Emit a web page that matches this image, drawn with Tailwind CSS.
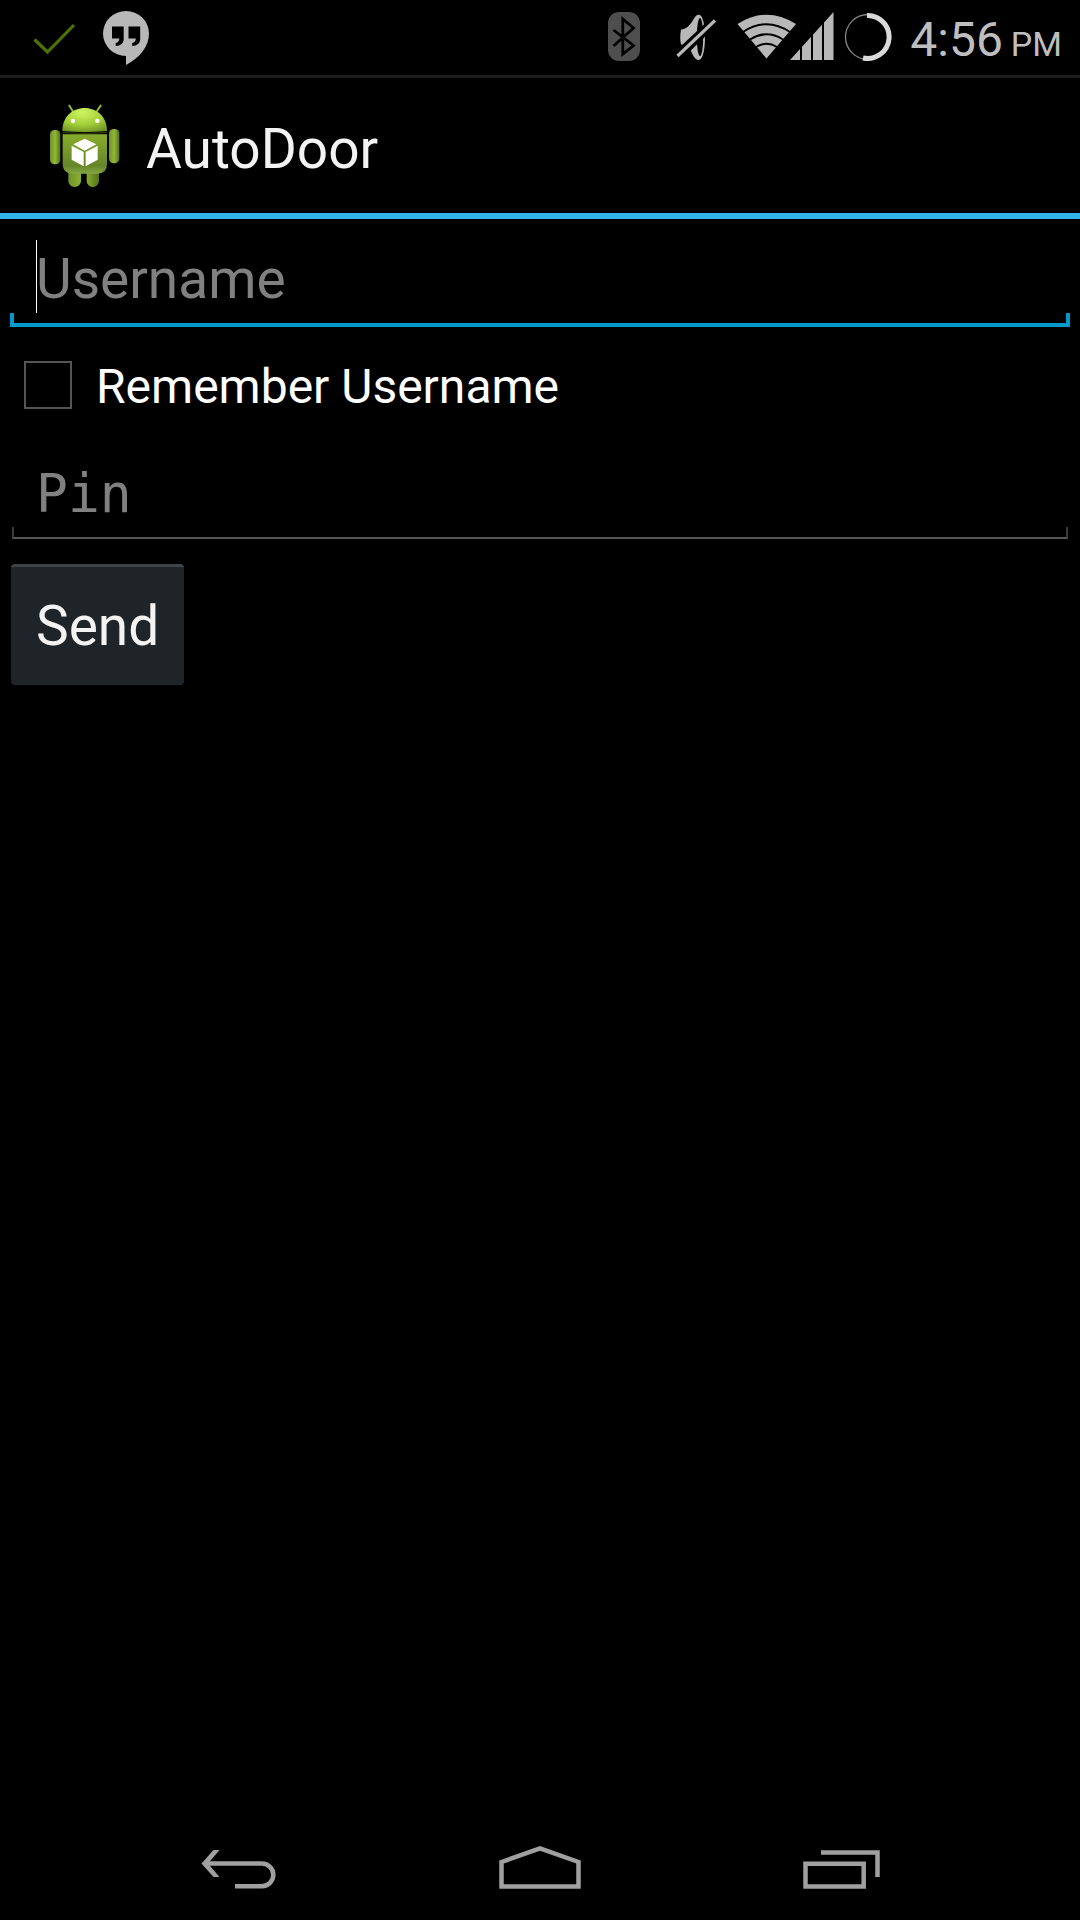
<!DOCTYPE html>
<html lang="en">
<head>
<meta charset="utf-8">
<meta name="viewport" content="width=device-width, initial-scale=1">
<title>AutoDoor</title>
<script src="https://cdn.jsdelivr.net/npm/@tailwindcss/browser@4"></script>
</head>
<body class="flex min-h-screen flex-col bg-black font-[Roboto,sans-serif] text-[#f3f3f3]">

<!-- Status bar -->
<div class="flex h-[78px] items-start justify-between border-b-[3px] border-[#1c1c1c] pl-8 pr-[18px]">
  <div class="flex gap-[22px]">
    <svg class="h-[75px] w-12" viewBox="32 0 48 75" fill="none" stroke="#4b7300" stroke-width="3.2" aria-label="Done"><path d="M34.5 39.5 47.5 52 74 25"/></svg>
    <svg class="h-[75px] w-12" viewBox="102 0 48 75" aria-label="Hangouts"><path fill="#b8b8b8" d="M126 11a23 22.500 0 0 1 23 22.500c0 13-9 24-23 31.500V56a23 22.500 0 0 1 0-45Z"/><path d="M112 26.500h11.700v12.500c0 4-3 7-8 7v-3c2.300-.4 3.600-2 3.600-4.500H112ZM128.500 26.500h11.700v12.500c0 4-3 7-8 7v-3c2.300-.4 3.600-2 3.600-4.500h-7.300Z"/></svg>
  </div>
  <div class="flex">
    <svg class="mr-9 h-[75px] w-8" viewBox="608 0 32 75" aria-label="Bluetooth"><rect x="608" y="12" width="32" height="49" rx="11" fill="#4e4e4e"/><path d="M613.500 30 633.500 45.500 622.800 54V19L633.500 28 613.500 46" fill="none" stroke="#000" stroke-width="2.800"/></svg>
    <svg class="mr-[21px] h-[75px] w-10" viewBox="676 0 40 75" aria-label="Silent"><path fill="#b8b8b8" d="M681 29.500c5 0 9-4 13-11 2-3.500 4-4 6-3.500 3 2 5 10 5 22s-2 22-6 23c-4 .5-6-5-9-11-3-3.500-6-4.500-9-4.500-1-4-1-10 0-15Z"/><ellipse cx="700" cy="37" rx="3.200" ry="19"/><path d="M674 52.500 713 16l4 9-37 36Z"/><path d="M677.500 56 715 20.500" stroke="#b8b8b8" stroke-width="3.200"/></svg>
    <svg class="h-[75px] w-[60px]" viewBox="737 0 60 75" aria-label="Wi-Fi"><path fill="#b8b8b8" d="M766.500 58.500 737.500 24q29-18.500 58.500 0Z"/><path fill="none" stroke="#000" stroke-width="2" d="M743 32q23.500-15.500 47 0M750 39.500q16.500-10.500 33 0M756 47q10.500-6.500 21 0"/></svg>
    <svg class="-ml-[7px] mr-2.5 h-[75px] w-11" viewBox="790 0 44 75" aria-label="Cellular signal"><path fill="#b8b8b8" d="M790 60 833.500 12V60Z"/><path stroke="#000" stroke-width="2" d="M801 10V62M812 10V62M823 10V62"/></svg>
    <svg class="mr-[18px] h-[75px] w-12" viewBox="844 0 48 75" fill="none" aria-label="Battery"><circle cx="868" cy="37" r="22.500" stroke="#858585" stroke-width="1.300"/><path d="M867 15.500a21.500 21.500 0 1 1-4 42.500" stroke="#dadada" stroke-width="5"/></svg>
    <div class="flex items-baseline gap-2 pt-[11px] text-[#bebebe]"><span class="text-[48px] leading-[58px]">4:56</span><span class="text-[34px] leading-[58px]">PM</span></div>
  </div>
</div>

<!-- Action bar -->
<header class="flex h-[141px] items-center gap-[26px] border-b-[6px] border-[#33b5e5] pl-[49px]">
  <svg class="h-[84px] w-[71px]" viewBox="87 75 213 252" aria-hidden="true">
    <defs>
      <linearGradient id="body" x1="0" y1="0" x2="0" y2="1"><stop offset="0" stop-color="#88ac2c"/><stop offset=".8" stop-color="#66852a"/><stop offset="1" stop-color="#86a844"/></linearGradient>
      <radialGradient id="head" cx=".45" cy=".2" r=".85"><stop offset="0" stop-color="#cdf562"/><stop offset=".6" stop-color="#a1cd36"/><stop offset="1" stop-color="#6f9424"/></radialGradient>
      <linearGradient id="limb"><stop offset="0" stop-color="#6f9126"/><stop offset=".5" stop-color="#91b836"/><stop offset="1" stop-color="#557019"/></linearGradient>
    </defs>
    <path d="M148 80 158 96M242 80 231 96" stroke="#8fb934" stroke-width="6" stroke-linecap="round"/>
    <rect x="90" y="153" width="31" height="103" rx="14" fill="url(#limb)"/>
    <rect x="267" y="150" width="31" height="103" rx="14" fill="url(#limb)"/>
    <path d="M145 270h38v36a19 18 0 0 1-38 0ZM200 270h37v36a18 18 0 0 1-37 0Z" fill="url(#limb)"/>
    <path d="M128 166h133v89q0 29-30 29h-73q-30 0-30-29Z" fill="url(#body)"/>
    <path d="M127 156c0-42 30-69 67-69s67 27 67 69q-67 6-134 0Z" fill="url(#head)"/>
    <path d="M128 160q67 6 133 0" fill="none" stroke="#2c390c" stroke-width="4"/>
    <circle cx="159" cy="126" r="6.500" fill="#fff"/><circle cx="232" cy="126" r="6.500" fill="#fff"/>
    <path fill="#fff" d="M194 179 229 196 194 215 160 196ZM155 200 191 219V262L155 242ZM233 200 197 219V262L233 242Z"/>
  </svg>
  <h1 class="pt-1.5 text-[55px] leading-[64px]">AutoDoor</h1>
</header>

<!-- Login form -->
<form class="flex flex-col items-stretch">
  <div class="relative mx-2.5 h-[108px] pt-3">
    <input id="username" type="text" aria-label="Username" placeholder="Username" class="h-full w-full bg-transparent pl-[26px] text-[55px] outline-none placeholder:text-[#808080]">
    <span class="absolute left-[26px] top-[21px] h-[73px] w-px bg-white"></span>
    <span class="pointer-events-none absolute inset-x-0 bottom-0 h-3.5 border-x-4 border-b-4 border-[#0099cc]"></span>
  </div>
  <div class="flex h-[116px] items-center gap-6 pl-6">
    <input id="remember" type="checkbox" class="size-12 appearance-none border-2 border-[#555555] checked:bg-[#0099cc]">
    <label for="remember" class="pt-1 text-[48px] leading-[58px] text-white">Remember Username</label>
  </div>
  <div class="relative mx-3 h-24 pt-1">
    <input id="pin" type="password" aria-label="Pin" placeholder="Pin" class="h-full w-full bg-transparent pl-6 font-['DejaVu_Sans_Mono',monospace] text-[53px] outline-none placeholder:text-[#808080]">
    <span class="pointer-events-none absolute inset-x-0 bottom-0 h-3 border-x-2 border-b-2 border-x-[#3a3a3a] border-b-[#555555]"></span>
  </div>
  <button type="button" class="ml-[11px] mt-[25px] h-[121px] self-start rounded border-t-[3px] border-[#404447] bg-[#1f2428] px-[25px] text-[55px] leading-[64px]">Send</button>
</form>

<!-- Navigation bar -->
<nav class="mt-auto flex h-[100px] items-center justify-center gap-[222px]" aria-label="System">
  <button type="button" aria-label="Back"><svg class="h-12 w-[76px]" viewBox="22 26 76 48" fill="none" stroke="#a0a0a0" stroke-width="4.500"><path d="M26 43.500H83a11.300 11.300 0 0 1 0 22.700H56"/><path fill="#a0a0a0" stroke="none" d="M22.500 43.500 34.500 30h6L29 43.500 40.500 57h-6Z"/></svg></button>
  <button type="button" aria-label="Home"><svg class="h-12 w-[82px]" viewBox="19 26 82 48" fill="none" stroke="#a0a0a0" stroke-width="4.500"><path d="M21.500 66.500V42L60 28.500 98.500 42V66.500Z"/></svg></button>
  <button type="button" aria-label="Recent apps"><svg class="h-12 w-[77px]" viewBox="24 26 77 48" fill="none" stroke="#a0a0a0" stroke-width="4.500"><path d="M26.500 43.700H84.700V66.500H26.500ZM42 32.500H98.500V57"/></svg></button>
</nav>
</body>
</html>
